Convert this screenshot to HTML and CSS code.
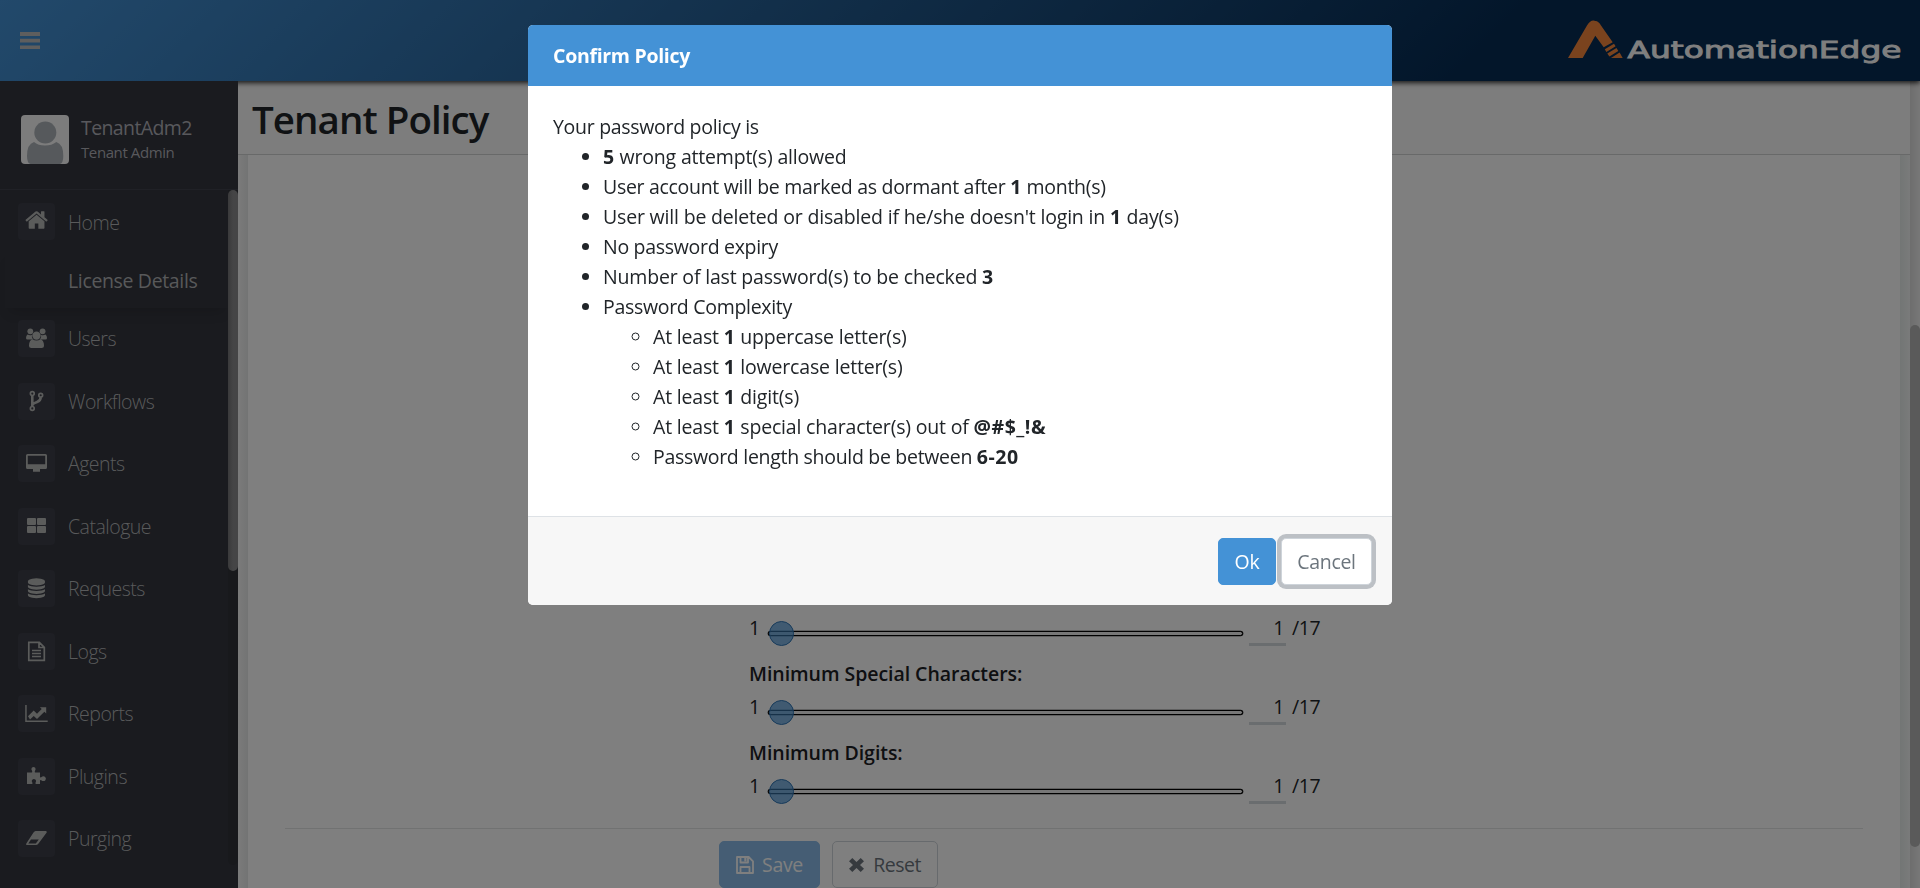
FILE: index.html
```html
<!DOCTYPE html>
<html lang="en">
<head>
<meta charset="utf-8">
<title>Tenant Policy</title>
<link rel="stylesheet" href="styles.css">
</head>
<body>
<div class="app">
  <header class="topbar">
    <svg class="menu-icon" viewBox="0 0 20 17"><path d="M0 0h20v4H0zM0 6.8h20v3.7H0zM0 13.4h20v3.6H0z"/></svg>
    <svg class="logo" viewBox="0 0 340 50">
      <path class="logo-mark" d="M4 38 23 5.500Q27-1 31.500 1 34.500 1 37 5.500L48.700 22.300 39.700 27.300 31.300 15.700 18.700 38z"/>
      <path class="logo-mark" d="M40.800 29.300 50 23.800 51.600 26.300 42.400 31.900zM43.300 33.600 52.500 28 54.300 31 45.400 36.500zM47 38 55.600 32.600 58.700 38z"/>
      <text class="logo-text" x="63.500" y="37.700" textLength="274" lengthAdjust="spacingAndGlyphs">AutomationEdge</text>
    </svg>
  </header>
  <div class="layout">
    <aside class="sidebar">
      <div class="user">
        <svg class="avatar" viewBox="0 0 48 49"><rect width="48" height="49" rx="4" fill="#f8f8f8"/><circle cx="24.300" cy="17.500" r="11" fill="#adb3b9"/><path d="M13 27Q6 29 6 41q0 7 3.500 8h29.500q3.300-1 3.300-8 0-12-7-14-4.500 3.500-11.300 3.500T13 27z" fill="#adb3b9"/></svg>
        <div>
          <div class="user-name">TenantAdm2</div>
          <div class="user-role">Tenant Admin</div>
        </div>
      </div>
      <div class="nav-wrap">
        <nav class="nav">
          <a class="item"><svg class="tile" viewBox="0 0 37 37"><g transform="translate(6.300 4.800) scale(.0137)"><path d="M1472 992v480q0 26-19 45t-45 19h-384v-384h-256v384h-384q-26 0-45-19t-19-45v-480q0-1 .5-3t.5-3l575-474 575 474q1 2 1 6zm223-69l-62 74q-8 9-21 11h-3q-13 0-21-7l-692-577-692 577q-12 8-24 7-13-2-21-11l-62-74q-8-10-7-23.500t11-21.500l719-599q32-26 76-26t76 26l244 204v-195q0-14 9-23t23-9h192q14 0 23 9t9 23v408l219 182q10 8 11 21.500t-7 23.500z"/></g></svg><span>Home</span></a>
          <a class="subitem">License Details</a>
          <a class="item"><svg class="tile" viewBox="0 0 37 37"><circle cx="12.300" cy="11.300" r="2.900"/><circle cx="24.600" cy="11.300" r="2.900"/><path d="M9.500 14.500q2.500 1.500 4.500.3-.7 2.500 1 4.700H9.500Q8 19.500 8 18q0-2.500 1.500-3.500zM27.500 14.500q-2.500 1.500-4.500.3.700 2.500-1 4.700h5.500q1.500 0 1.500-1.500 0-2.500-1.500-3.500z"/><circle cx="18.500" cy="15.600" r="4.200"/><path d="M14.500 19.300q4 2.500 8 0Q26 20.500 26 25.500q0 2.500-2.500 2.500h-10q-2.500 0-2.500-2.500 0-5 3.500-6.200z"/></svg><span>Users</span></a>
          <a class="item"><svg class="tile line" viewBox="0 0 37 37"><circle cx="14.300" cy="10.600" r="1.900"/><circle cx="22.700" cy="12.200" r="1.900"/><circle cx="14.300" cy="25.400" r="1.900"/><path class="thick" d="M14.300 12.700v10.500M22.700 14.200q0 3.600-3.600 4.800T14.500 21.500"/></svg><span>Workflows</span></a>
          <a class="item"><svg class="tile" viewBox="0 0 37 37"><path fill-rule="evenodd" d="M9.500 9h18Q29 9 29 10.500v12Q29 24 27.500 24H22v2.700h-7V24H9.500Q8 24 8 22.500v-12Q8 9 9.500 9zm.3 1.700v8.600h17.400v-8.600z"/></svg><span>Agents</span></a>
          <a class="item"><svg class="tile" viewBox="0 0 37 37"><rect x="9" y="10" width="9" height="7" rx="1"/><rect x="19" y="10" width="9" height="7" rx="1"/><rect x="9" y="18" width="9" height="7" rx="1"/><rect x="19" y="18" width="9" height="7" rx="1"/></svg><span>Catalogue</span></a>
          <a class="item"><svg class="tile" viewBox="0 0 37 37"><g transform="translate(8.500 8.300) scale(.0111)"><path d="M896 768q237 0 443-43t325-127v170q0 69-103 128t-280 93.500-385 34.500-385-34.500-280-93.500-103-128v-170q119 84 325 127t443 43zm0 768q237 0 443-43t325-127v170q0 69-103 128t-280 93.500-385 34.500-385-34.500-280-93.500-103-128v-170q119 84 325 127t443 43zm0-384q237 0 443-43t325-127v170q0 69-103 128t-280 93.500-385 34.500-385-34.500-280-93.500-103-128v-170q119 84 325 127t443 43zm0-1152q208 0 385 34.500t280 93.500 103 128v128q0 69-103 128t-280 93.500-385 34.500-385-34.500-280-93.500-103-128v-128q0-69 103-128t280-93.500 385-34.500z"/></g></svg><span>Requests</span></a>
          <a class="item"><svg class="tile line" viewBox="0 0 37 37"><path d="M10.800 9.300h10.500l5 5v13h-15.500zM21 9.500v5h5M14 17.500h9M14 20.500h9M14 23.500h9"/></svg><span>Logs</span></a>
          <a class="item"><svg class="tile" viewBox="0 0 37 37"><path d="M7.200 10h1.500v15.500h21v1.500H7.200zM10 21.300l5.700-5.700 3.300 3.200 4.700-4.700-1.800-1.800h6.300v6.300l-1.800-1.800-7.400 7.300-3.300-3.200-3.700 3.500z"/></svg><span>Reports</span></a>
          <a class="item"><svg class="tile" viewBox="0 0 37 37"><path d="M9 14.500h4.700q.7 0 .5-1.200-1.500-2.300-.4-3.600 1.700-1.600 3.400 0 1.100 1.300-.4 3.600-.2 1.200.5 1.200H22v4.300q.2 1 1.200.4 2.300-1.700 4-.2 1.500 1.700 0 3.400-1.700 1.400-4-.2-1-.7-1.200.4V26h-4q-1-.4-.4-1.600 1-1.400 0-2.700-1.900-1.200-3.300 0-1.200 1.300 0 2.800.7 1.100-.3 1.500H9z"/></svg><span>Plugins</span></a>
          <a class="item"><svg class="tile" viewBox="0 0 37 37"><path fill-rule="evenodd" d="M17.500 11h10.200q1.600 0 1 1.500L20.500 23.500q-1.200 1.500-2.500 1.500H9q-1.600 0-.7-1.500l7.200-11q1-1.500 2-1.500zM13 19.500 10.300 23.500h7.500l3-4z"/></svg><span>Purging</span></a>
        </nav>
        <div class="nav-track"><div class="nav-thumb"></div></div>
      </div>
    </aside>
    <main class="main">
      <h1 class="title">Tenant Policy</h1>
      <section class="card">
        <div class="fields">
          <div class="range"><span class="min">1</span><div class="track"><i class="thumb"></i></div><span class="value">1</span><span class="max">/17</span></div>
          <div class="label">Minimum Special Characters:</div>
          <div class="range"><span class="min">1</span><div class="track"><i class="thumb"></i></div><span class="value">1</span><span class="max">/17</span></div>
          <div class="label">Minimum Digits:</div>
          <div class="range"><span class="min">1</span><div class="track"><i class="thumb"></i></div><span class="value">1</span><span class="max">/17</span></div>
        </div>
        <div class="actions">
          <button class="btn save"><svg class="save-icon" viewBox="0 0 18 18"><path d="M1 1h11.700L17 5.300V17H1zM4.500 17v-6h9v6M4.500 1v5.500h7.500V1" fill="none" stroke="currentColor" stroke-width="1.800" stroke-linejoin="round"/><path d="M8.300 2h2.200v3.500H8.300z"/></svg>Save</button>
          <button class="btn reset"><svg class="x-icon" viewBox="0 0 15 14"><path d="M3.300 0 7.500 4.100 11.700 0 15 3.200 11 7l4 3.800L11.700 14 7.500 9.900 3.300 14 0 10.800 4 7 0 3.200z"/></svg>Reset</button>
        </div>
      </section>
    </main>
    <div class="page-track"><div class="page-thumb"></div></div>
  </div>
</div>
<div class="backdrop">
  <div class="modal">
    <div class="modal-head">Confirm Policy</div>
    <div class="modal-body">
      Your password policy is
      <ul>
        <li class="loose"><b>5</b> wrong attempt(s) allowed</li>
        <li>User account will be marked as dormant after <b>1</b> month(s)</li>
        <li class="loose">User will be deleted or disabled if he/she doesn't login in <b>1</b> day(s)</li>
        <li>No password expiry</li>
        <li class="loose">Number of last password(s) to be checked <b>3</b></li>
        <li>Password Complexity
          <ul>
            <li class="loose">At least <b>1</b> uppercase letter(s)</li>
            <li class="loose">At least <b>1</b> lowercase letter(s)</li>
            <li class="loose">At least <b>1</b> digit(s)</li>
            <li class="loose">At least <b>1</b> special character(s) out of <b>@#$_!&amp;</b></li>
            <li>Password length should be between <b>6-20</b></li>
          </ul>
        </li>
      </ul>
    </div>
    <div class="modal-foot">
      <button class="btn ok">Ok</button>
      <button class="btn cancel">Cancel</button>
    </div>
  </div>
</div>
</body>
</html>
```
FILE: styles.css
```css
* { box-sizing: border-box; }
body {
  margin: 0;
  font: 19.5px/30px "Open Sans", "Noto Sans", sans-serif;
  letter-spacing: -0.3px;
  color: #212529;
  background: #fff;
  overflow: hidden;
}
.app { height: 888px; display: flex; flex-direction: column; overflow: hidden; }

.topbar {
  flex: none;
  height: 81px;
  position: relative;
  z-index: 2;
  display: flex;
  justify-content: space-between;
  align-items: flex-start;
  padding: 20px 16px 0 20px;
  background: linear-gradient(135deg, #4492d6 0%, #062c54 77%);
  box-shadow: 0 2px 5px rgba(0, 0, 0, .8);
}
.menu-icon { width: 20px; height: 17px; margin-top: 12px; fill: #bcbcbc; }
.logo { width: 340px; height: 50px; }
.logo-mark { fill: #f5873c; }
.logo-text {
  font: 23.5px "DejaVu Sans", sans-serif;
  letter-spacing: 0;
  fill: #fff;
  stroke: #fff;
  stroke-width: .9px;
}

.layout { flex: 1; display: flex; min-height: 0; }
.sidebar {
  width: 238px;
  flex: none;
  display: flex;
  flex-direction: column;
  background: #34363e;
  position: relative;
  z-index: 3;
}
.user {
  height: 109px;
  flex: none;
  display: flex;
  gap: 12px;
  padding: 34px 0 0 21px;
  border-bottom: 1px solid #40434c;
}
.avatar { width: 48px; height: 49px; }
.user-name { color: #b0b1b8; line-height: 25px; letter-spacing: -.6px; }
.user-role { color: #b0b1b8; font-size: 15px; line-height: 24px; letter-spacing: -.4px; }
.nav-wrap { flex: 1; display: flex; min-height: 0; }
.nav { flex: 1; overflow: hidden; }
.item {
  height: 62.5px;
  display: flex;
  align-items: center;
  gap: 13px;
  padding-left: 18px;
  color: #b2b4b6;
  font-weight: 300;
  letter-spacing: -.5px;
}
.item span { padding-top: 1px; }
.item:first-child span { padding-top: 3px; }
.tile { width: 37px; height: 37px; border-radius: 4px; background: #3c3e48; fill: #b6b8b6; }
.line { fill: none; stroke: #b6b8b6; stroke-width: 1.7; }
.line .thick { stroke-width: 2.6; }
.subitem {
  display: block;
  height: 55px;
  margin-left: 5px;
  padding: 13px 0 0 63px;
  color: #b0b2b4;
  letter-spacing: -.35px;
  box-shadow: 0 8px 12px -4px rgba(0, 0, 0, .14);
}
.nav-track { width: 10px; height: 675px; border-radius: 0 0 5px 5px; background: #303239; }
.nav-thumb { height: 381px; border-radius: 5px; background: linear-gradient(90deg, #747476, #8a8a8c 50%, #8a8a8c); }

.main { flex: 1; display: flex; flex-direction: column; background: linear-gradient(90deg, #f6f6f6, #e6e8e8 10px, #fff 10px, #fff 1662px, #e6ecea 1662px, #f4f6f6); }
.title {
  height: 74px;
  flex: none;
  margin: 0;
  padding: 8px 0 0 14px;
  font-size: 38.5px;
  line-height: 60px;
  font-weight: 600;
  letter-spacing: -.95px;
  background: #fafafa;
  border-bottom: 1px solid #d0d2d2;
}
.card {
  margin: 0 10px;
  padding-top: 454px;
  display: flex;
  flex-direction: column;
}
.fields { width: 574px; margin-left: 501px; }
.range { height: 49px; padding-top: 3px; display: flex; align-items: flex-start; }
.min { width: 19px; padding-top: 1px; }
.track {
  width: 475px;
  height: 5px;
  margin-top: 19px;
  border: 1px solid #000;
  border-radius: 3px;
  background: #efefef;
  box-shadow: 0 0 0 .3px #000;
  position: relative;
}
.thumb {
  position: absolute;
  left: 0;
  top: -11px;
  width: 25px;
  height: 25px;
  border-radius: 50%;
  border: 1px solid #2e74b4;
  background: rgba(68, 146, 214, .68);
}
.value {
  width: 37px;
  height: 34px;
  margin-left: 6px;
  padding: 1px 2px 0 0;
  text-align: right;
  border-bottom: 3px solid #d4dade;
}
.max { margin-left: 6px; padding-top: 1px; letter-spacing: -.4px; }
.label { font-weight: 600; letter-spacing: -.05px; color: #1c2024; height: 30px; padding-top: 1px; }
.actions {
  display: flex;
  gap: 12px;
  margin: 12px 37px 0;
  padding: 12px 0 0 434px;
  border-top: 1px solid #e2e4e4;
}

.btn {
  font: inherit;
  letter-spacing: inherit;
  height: 47px;
  padding: 0;
  border: 1px solid;
  border-radius: 5px;
  display: flex;
  align-items: center;
  justify-content: center;
}
.save { width: 101px; gap: 8px; color: #fff; background: #8abbe8; border-color: #8abbe8; }
.save-icon { width: 18px; height: 18px; fill: currentColor; }
.reset { width: 106px; gap: 9px; color: #6c757d; background: #fff; border-color: #ced4da; letter-spacing: -.5px; }
.x-icon { width: 15px; height: 14px; fill: #6c757d; }

.page-track { width: 10px; background: linear-gradient(90deg, #dcdcdc, #f0f0f0); padding-top: 244px; }
.page-thumb { height: 522px; border-radius: 5px; background: #b4b4b4; }

.backdrop { position: fixed; inset: 0; z-index: 10; background: rgba(0, 0, 0, .5); padding-top: 25px; }
.modal { width: 864px; margin: 0 auto; border-radius: 5px; background: #fff; overflow: hidden; }
.modal-head { height: 61px; padding: 16px 25px 0; color: #fff; background: #4492d6; font-weight: 700; }
.modal-body { height: 430px; padding: 26px 25px 0; }
.modal-body ul { margin: 0; padding-left: 50px; }
.modal-body b { letter-spacing: .5px; }
.loose { letter-spacing: -.18px; }
.modal-foot {
  height: 89px;
  padding: 21px 20px 0;
  display: flex;
  justify-content: flex-end;
  gap: 5px;
  background: #f7f7f7;
  border-top: 1px solid #dee2e6;
}
.ok { width: 58px; color: #fff; background: #4492d6; border-color: #4492d6; }
.cancel { width: 91px; color: #6c757d; background: #fff; border-color: #ced4da; box-shadow: 0 0 0 4px #bcc0c5; }
```
